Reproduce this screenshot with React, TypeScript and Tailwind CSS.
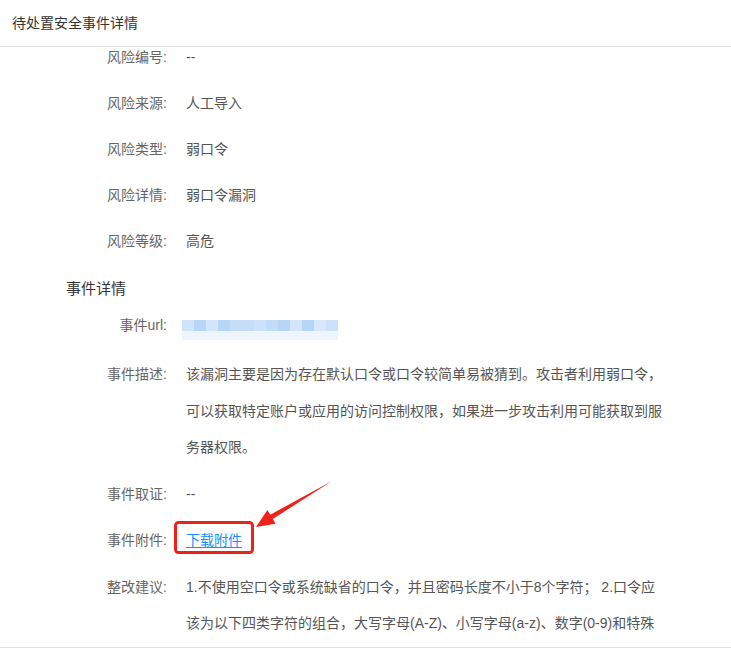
import React from "react";

const FONT = '"Liberation Sans", "Noto Sans CJK SC", sans-serif';

function Row({
  label,
  children,
  lh = "leading-[36.5px]",
  extra = "",
}: {
  label: string;
  children: React.ReactNode;
  lh?: string;
  extra?: string;
}) {
  return (
    <div className={`flex mb-[10px] ${lh} ${extra}`}>
      <div className="w-[167px] shrink-0 text-right text-[#666]">{label}</div>
      <div className="ml-[19px] text-[#555]">{children}</div>
    </div>
  );
}

const blocks = [
  "#cfe3fa", "#b5d6f7", "#d3e5fa", "#b8d7f7", "#c5def8", "#c5def8", "#cde2f9",
  "#c1dcf8", "#b7d6f7", "#d3e5fa", "#b5d6f7", "#d8e8fb", "#cce1f9",
];

export default function App() {
  return (
    <div
      className="relative w-[731px] h-[664px] bg-white text-[14px] flex flex-col"
      style={{ fontFamily: FONT }}
    >
      <div className="h-[47px] shrink-0 border-b border-[#e0e0e8] pl-3 pt-[1px] flex items-center text-[#333]">
        待处置安全事件详情
      </div>
      <div className="h-[601px] shrink-0 overflow-hidden border-b border-[#dddddd]">
        <div className="-mt-[8px] flex flex-col">
          <Row label="风险编号:" lh="leading-[36px]">--</Row>
          <Row label="风险来源:" lh="leading-[36px]">人工导入</Row>
          <Row label="风险类型:" lh="leading-[36px]">弱口令</Row>
          <Row label="风险详情:" lh="leading-[36px]">弱口令漏洞</Row>
          <Row label="风险等级:" lh="leading-[36px]">高危</Row>
          <div className="pl-[66px] text-[15px] leading-[36px] text-[#333] mt-[2px]">事件详情</div>
          <Row label="事件url:">
            <div className="flex flex-col mt-[13px] -ml-[4px] w-[156px]">
              <div className="flex h-[11px]">
                {blocks.map((c, i) => (
                  <div key={i} className="w-[12px] h-full" style={{ backgroundColor: c }} />
                ))}
              </div>
              <div className="h-[9px] bg-[#eef5fd]" />
            </div>
          </Row>
          <Row label="事件描述:" extra="mt-[2.5px]">
            <div className="whitespace-nowrap">
              <div>该漏洞主要是因为存在默认口令或口令较简单易被猜到。攻击者利用弱口令，</div>
              <div>可以获取特定账户或应用的访问控制权限，如果进一步攻击利用可能获取到服</div>
              <div>务器权限。</div>
            </div>
          </Row>
          <Row label="事件取证:">--</Row>
          <Row label="事件附件:">
            <span className="text-[#1890ff] underline underline-offset-2">下载附件</span>
          </Row>
          <Row label="整改建议:">
            <div className="whitespace-nowrap">
              <div>1.不使用空口令或系统缺省的口令，并且密码长度不小于8个字符； 2.口令应</div>
              <div>该为以下四类字符的组合，大写字母(A-Z)、小写字母(a-z)、数字(0-9)和特殊</div>
            </div>
          </Row>
        </div>
      </div>
      <svg
        className="absolute top-0 left-0 pointer-events-none"
        width="731"
        height="664"
        viewBox="0 0 731 664"
      >
        <rect x="175.5" y="522.5" width="77" height="30" rx="3" fill="none" stroke="#f0201a" strokeWidth="3" />
        <polygon
          points="256,527 267.4,509.9 270.2,514.7 332,481 272.8,519 275.6,523.7"
          fill="#f0201a"
        />
      </svg>
    </div>
  );
}
